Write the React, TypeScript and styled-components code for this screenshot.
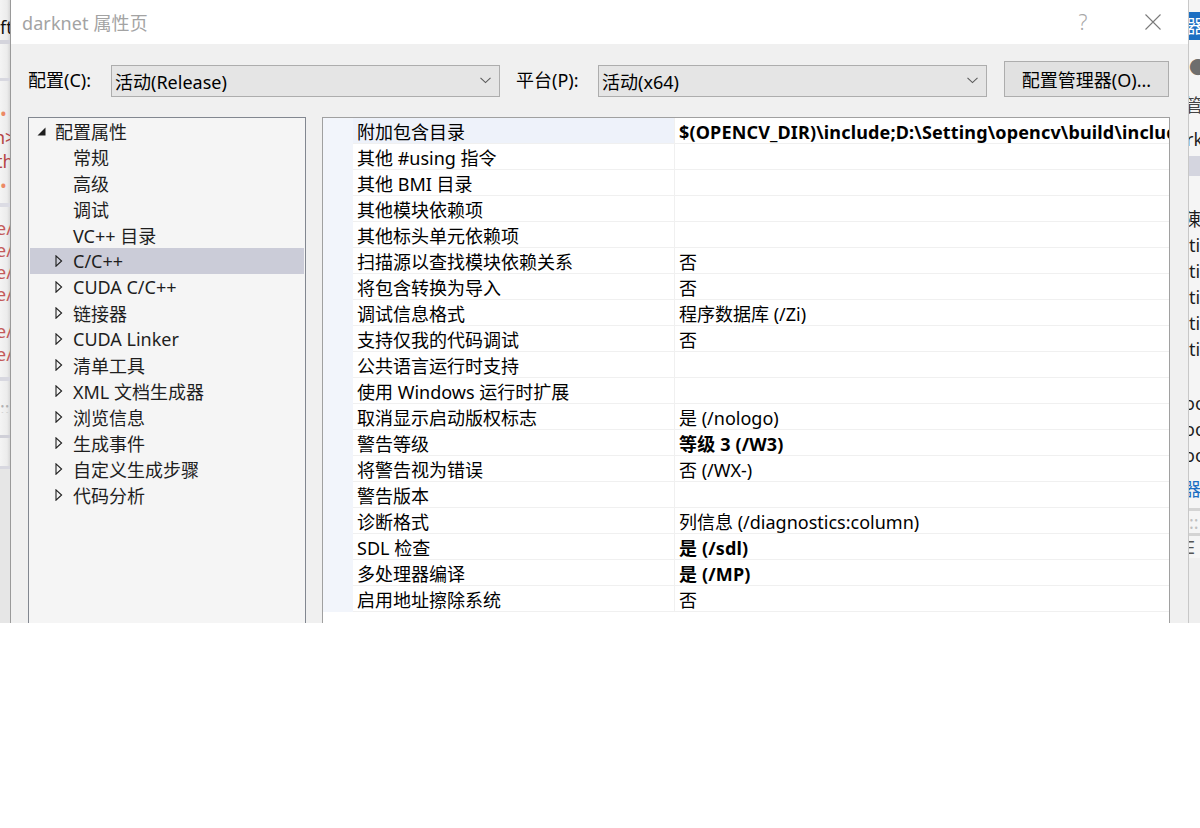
import React from 'react';
import styled, { createGlobalStyle } from 'styled-components';

const font = `"Noto Sans", "Noto Sans CJK SC", sans-serif`;

const GlobalStyle = createGlobalStyle`
  html, body {
    margin: 0;
    padding: 0;
    background: #ffffff;
    font-family: ${font};
  }
`;

const Screen = styled.div`
  width: 1200px;
  height: 623px;
  display: flex;
  overflow: hidden;
  background: #ffffff;
`;

// background windows peeking out at both sides
const SideStrip = styled.div<{ $width: number; $right?: boolean }>`
  width: ${({ $width }) => $width}px;
  flex: none;
  display: flex;
  flex-direction: column;
  overflow: hidden;
  background: ${({ $right }) =>
    $right ? '#f5f5f5' : 'linear-gradient(to right, #f4f4f4 0%, #ececec 70%, #d8d8d8 100%)'};
`;

const StripRow = styled.div<{ $h: number; $bg?: string; $color?: string; $shift?: number }>`
  height: ${({ $h }) => $h}px;
  flex: none;
  background: ${({ $bg }) => $bg || 'transparent'};
  color: ${({ $color }) => $color || '#1e1e1e'};
  font-size: 18px;
  line-height: ${({ $h }) => $h}px;
  white-space: nowrap;
  overflow: hidden;
  text-indent: ${({ $shift }) => $shift ?? 0}px;
`;

const Dialog = styled.div`
  flex: 1;
  display: flex;
  flex-direction: column;
  border-left: 1px solid #9a9a9a;
  border-right: 1px solid #c8c8c8;
  min-width: 0;
`;

const TitleBar = styled.div`
  height: 44px;
  flex: none;
  display: flex;
  align-items: center;
  background: #ffffff;
  padding-left: 11px;
`;

const Title = styled.div`
  flex: 1;
  font-size: 18px;
  color: #a3a3a3;
  letter-spacing: 0.1px;
`;

const TitleButton = styled.div`
  width: 70px;
  height: 44px;
  display: flex;
  align-items: center;
  justify-content: center;
  color: #a8a8a8;
  font-size: 21px;
  font-weight: 300;
`;

const Body = styled.div`
  flex: 1;
  background: #f0f0f0;
  padding: 17px 18px 0 17px;
  display: flex;
  flex-direction: column;
  min-height: 0;
`;

const ConfigRow = styled.div`
  height: 36px;
  flex: none;
  display: flex;
  align-items: flex-end;
`;

const Label = styled.div<{ $w: number; $pad?: number }>`
  width: ${({ $w }) => $w}px;
  box-sizing: border-box;
  padding-left: ${({ $pad }) => $pad ?? 0}px;
  flex: none;
  height: 32px;
  line-height: 31px;
  font-size: 18px;
  color: #000;
`;

const Select = styled.div`
  width: 389px;
  height: 32px;
  box-sizing: border-box;
  flex: none;
  display: flex;
  align-items: center;
  padding: 0 8px 1px 3px;
  background: #e5e5e5;
  border: 1px solid #adadad;
  font-size: 18px;
  color: #000;
`;

const SelectText = styled.span`
  flex: 1;
`;

const Button = styled.div`
  margin-left: 17px;
  width: 165px;
  height: 36px;
  box-sizing: border-box;
  display: flex;
  align-items: center;
  justify-content: center;
  background: #e1e1e1;
  border: 1px solid #adadad;
  font-size: 18px;
  color: #000;
`;

const Panels = styled.div`
  margin-top: 20px;
  flex: 1;
  display: flex;
  gap: 16px;
  min-height: 0;
`;

const Tree = styled.div`
  width: 278px;
  flex: none;
  box-sizing: border-box;
  border: 1px solid #828790;
  border-bottom: none;
  background: #f5f5f5;
`;

const TreeRow = styled.div<{ $selected?: boolean; $indent: number }>`
  height: 26px;
  margin: 0 1px;
  display: flex;
  align-items: center;
  padding-left: ${({ $indent }) => $indent}px;
  background: ${({ $selected }) => ($selected ? '#cbccd8' : 'transparent')};
  font-size: 18px;
  color: #1e1e1e;
  white-space: nowrap;
`;

const Toggle = styled.span`
  width: 18px;
  flex: none;
  display: flex;
  align-items: center;
`;

const Grid = styled.div`
  flex: 1;
  box-sizing: border-box;
  border: 1px solid #a0a0a0;
  border-bottom: none;
  background: #ffffff;
  display: grid;
  grid-template-columns: 30px 322px 1fr;
  grid-auto-rows: 26px;
  align-content: start;
  min-width: 0;
`;

const Gutter = styled.div`
  background: #f2f5fb;
`;

const Cell = styled.div<{ $bold?: boolean; $active?: boolean; $divider?: boolean }>`
  box-sizing: border-box;
  padding: 3px 0 0 4px;
  border-bottom: 1px solid #f0f0f0;
  border-right: ${({ $divider }) => ($divider ? '1px solid #f0f0f0' : 'none')};
  background: ${({ $active }) => ($active ? '#eef2fa' : '#ffffff')};
  font-size: 18px;
  font-weight: ${({ $bold }) => ($bold ? 700 : 400)};
  letter-spacing: ${({ $bold }) => ($bold ? '0.15px' : '0')};
  line-height: 22px;
  color: #000;
  white-space: nowrap;
  overflow: hidden;
  min-width: 0;
`;

const Chevron = () => (
  <svg width="11" height="7" viewBox="0 0 11 7">
    <path d="M0.5 0.8 L5.5 5.6 L10.5 0.8" fill="none" stroke="#5a5a5a" strokeWidth="1.1" />
  </svg>
);

const Collapsed = () => (
  <svg width="8" height="12" viewBox="0 0 8 12">
    <path d="M1 0.8 L6.6 6 L1 11.2 Z" fill="none" stroke="#1e1e1e" strokeWidth="1.1" />
  </svg>
);

const Expanded = () => (
  <svg width="9" height="9" viewBox="0 0 9 9">
    <path d="M8.5 0.5 L8.5 8.5 L0.5 8.5 Z" fill="#1e1e1e" />
  </svg>
);

const CloseIcon = () => (
  <svg width="16" height="16" viewBox="0 0 16 16">
    <path d="M0.5 0.5 L15.5 15.5 M15.5 0.5 L0.5 15.5" stroke="#7a7a7a" strokeWidth="1.1" />
  </svg>
);

const treeItems: { label: string; kind: 'leaf' | 'closed' }[] = [
  { label: '常规', kind: 'leaf' },
  { label: '高级', kind: 'leaf' },
  { label: '调试', kind: 'leaf' },
  { label: 'VC++ 目录', kind: 'leaf' },
  { label: 'C/C++', kind: 'closed' },
  { label: 'CUDA C/C++', kind: 'closed' },
  { label: '链接器', kind: 'closed' },
  { label: 'CUDA Linker', kind: 'closed' },
  { label: '清单工具', kind: 'closed' },
  { label: 'XML 文档生成器', kind: 'closed' },
  { label: '浏览信息', kind: 'closed' },
  { label: '生成事件', kind: 'closed' },
  { label: '自定义生成步骤', kind: 'closed' },
  { label: '代码分析', kind: 'closed' }
];

const props: [string, string, boolean?][] = [
  ['附加包含目录', '$(OPENCV_DIR)\\include;D:\\Setting\\opencv\\build\\include;D:\\Setting\\opencv\\build\\include\\opencv2', true],
  ['其他 #using 指令', ''],
  ['其他 BMI 目录', ''],
  ['其他模块依赖项', ''],
  ['其他标头单元依赖项', ''],
  ['扫描源以查找模块依赖关系', '否'],
  ['将包含转换为导入', '否'],
  ['调试信息格式', '程序数据库 (/Zi)'],
  ['支持仅我的代码调试', '否'],
  ['公共语言运行时支持', ''],
  ['使用 Windows 运行时扩展', ''],
  ['取消显示启动版权标志', '是 (/nologo)'],
  ['警告等级', '等级 3 (/W3)', true],
  ['将警告视为错误', '否 (/WX-)'],
  ['警告版本', ''],
  ['诊断格式', '列信息 (/diagnostics:column)'],
  ['SDL 检查', '是 (/sdl)', true],
  ['多处理器编译', '是 (/MP)', true],
  ['启用地址擦除系统', '否']
];

const leftStrip = [
  { h: 14 },
  { h: 26, t: 'ft', c: '#111' },
  { h: 4, bg: '#d4d4dc' },
  { h: 34 },
  { h: 3, bg: '#d8d8e0' },
  { h: 20 },
  { h: 24, t: '•', c: '#ec8a66' },
  { h: 24, t: 'n>', c: '#b54545', s: -6 },
  { h: 24, t: 'th', c: '#b54545', s: -4 },
  { h: 24, t: '•', c: '#ec8a66' },
  { h: 6 },
  { h: 4, bg: '#dcdce4' },
  { h: 10 },
  { h: 22, t: 'e/', c: '#c45a5a', s: -4 },
  { h: 22, t: 'e/', c: '#c45a5a', s: -4 },
  { h: 22, t: 'e/', c: '#c45a5a', s: -4 },
  { h: 22, t: 'e/', c: '#c45a5a', s: -4 },
  { h: 14 },
  { h: 24, t: 'e/', c: '#c45a5a', s: -4 },
  { h: 22, t: 'e/', c: '#c45a5a', s: -4 },
  { h: 12 },
  { h: 4, bg: '#d8d8e0' },
  { h: 22 },
  { h: 10, t: '::', c: '#b0b0b0' },
  { h: 22 },
  { h: 3, bg: '#d0d0d8' },
  { h: 28 },
  { h: 3, bg: '#d8d8e0' },
  { h: 200, bg: '#e6e6e6' }
];

const rightStrip = [
  { h: 12 },
  { h: 28, t: '器', c: '#ffffff', bg: '#1c6fc2', s: -3 },
  { h: 12 },
  { h: 30, t: '●', c: '#6e6e6e' },
  { h: 10 },
  { h: 26, t: '管', c: '#444', s: -4 },
  { h: 8 },
  { h: 26, t: 'rk', c: '#1e1e1e', s: -3 },
  { h: 4 },
  { h: 20, bg: '#d4d5df' },
  { h: 30 },
  { h: 26, t: '陳', c: '#1e1e1e', s: -6 },
  { h: 26, t: 'ti', c: '#1e1e1e' },
  { h: 26, t: 'ti', c: '#1e1e1e' },
  { h: 26, t: 'ti', c: '#1e1e1e' },
  { h: 26, t: 'ti', c: '#1e1e1e' },
  { h: 26, t: 'ti', c: '#1e1e1e' },
  { h: 28 },
  { h: 26, t: 'oo', c: '#1e1e1e', s: -5 },
  { h: 26, t: 'oo', c: '#1e1e1e', s: -5 },
  { h: 26, t: 'oo', c: '#1e1e1e', s: -5 },
  { h: 8 },
  { h: 26, t: '器', c: '#1c6fc2', s: -6 },
  { h: 6 },
  { h: 3, bg: '#d4d4d4' },
  { h: 22, t: '::', c: '#c0c0c0' },
  { h: 3, bg: '#d4d4d4' },
  { h: 22, t: 'E', c: '#555', s: -4 },
  { h: 200, bg: '#efefef' }
];

export default function App() {
  return (
    <>
      <GlobalStyle />
      <Screen>
        <SideStrip $width={10}>
          {leftStrip.map((r, i) => (
            <StripRow key={i} $h={r.h} $bg={r.bg} $color={r.c} $shift={r.s}>
              {r.t}
            </StripRow>
          ))}
        </SideStrip>

        <Dialog>
          <TitleBar>
            <Title>darknet 属性页</Title>
            <TitleButton>?</TitleButton>
            <TitleButton>
              <CloseIcon />
            </TitleButton>
          </TitleBar>

          <Body>
            <ConfigRow>
              <Label $w={83}>配置(C):</Label>
              <Select>
                <SelectText>活动(Release)</SelectText>
                <Chevron />
              </Select>
              <Label $w={98} $pad={16}>
                平台(P):
              </Label>
              <Select>
                <SelectText>活动(x64)</SelectText>
                <Chevron />
              </Select>
              <Button>配置管理器(O)...</Button>
            </ConfigRow>

            <Panels>
              <Tree>
                <TreeRow $indent={7}>
                  <Toggle>
                    <Expanded />
                  </Toggle>
                  配置属性
                </TreeRow>
                {treeItems.map(item => (
                  <TreeRow key={item.label} $indent={25} $selected={item.label === 'C/C++'}>
                    <Toggle>{item.kind === 'closed' && <Collapsed />}</Toggle>
                    {item.label}
                  </TreeRow>
                ))}
              </Tree>

              <Grid>
                {props.map(([name, value, bold], i) => (
                  <React.Fragment key={name}>
                    <Gutter />
                    <Cell $active={i === 0} $divider>
                      {name}
                    </Cell>
                    <Cell $bold={bold}>{value}</Cell>
                  </React.Fragment>
                ))}
              </Grid>
            </Panels>
          </Body>
        </Dialog>

        <SideStrip $width={11} $right>
          {rightStrip.map((r, i) => (
            <StripRow key={i} $h={r.h} $bg={r.bg} $color={r.c} $shift={r.s}>
              {r.t}
            </StripRow>
          ))}
        </SideStrip>
      </Screen>
    </>
  );
}
